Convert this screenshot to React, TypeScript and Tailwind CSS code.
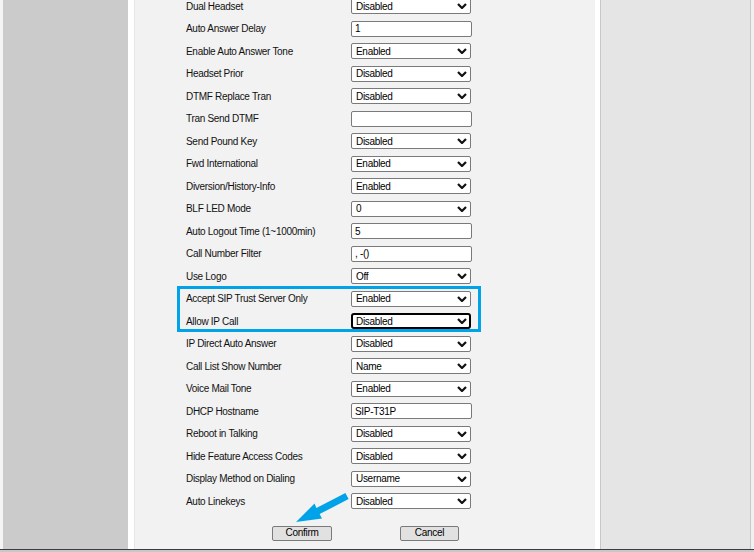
type Row = { label: string; kind: "select" | "input"; value: string; focus?: boolean };

const rows: Row[] = [
  { label: "Dual Headset", kind: "select", value: "Disabled" },
  { label: "Auto Answer Delay", kind: "input", value: "1" },
  { label: "Enable Auto Answer Tone", kind: "select", value: "Enabled" },
  { label: "Headset Prior", kind: "select", value: "Disabled" },
  { label: "DTMF Replace Tran", kind: "select", value: "Disabled" },
  { label: "Tran Send DTMF", kind: "input", value: "" },
  { label: "Send Pound Key", kind: "select", value: "Disabled" },
  { label: "Fwd International", kind: "select", value: "Enabled" },
  { label: "Diversion/History-Info", kind: "select", value: "Enabled" },
  { label: "BLF LED Mode", kind: "select", value: "0" },
  { label: "Auto Logout Time (1~1000min)", kind: "input", value: "5" },
  { label: "Call Number Filter", kind: "input", value: ", -()" },
  { label: "Use Logo", kind: "select", value: "Off" },
  { label: "Accept SIP Trust Server Only", kind: "select", value: "Enabled" },
  { label: "Allow IP Call", kind: "select", value: "Disabled", focus: true },
  { label: "IP Direct Auto Answer", kind: "select", value: "Disabled" },
  { label: "Call List Show Number", kind: "select", value: "Name" },
  { label: "Voice Mail Tone", kind: "select", value: "Enabled" },
  { label: "DHCP Hostname", kind: "input", value: "SIP-T31P" },
  { label: "Reboot in Talking", kind: "select", value: "Disabled" },
  { label: "Hide Feature Access Codes", kind: "select", value: "Disabled" },
  { label: "Display Method on Dialing", kind: "select", value: "Username" },
  { label: "Auto Linekeys", kind: "select", value: "Disabled" },
];

function Chevron() {
  return (
    <svg width="10" height="6" viewBox="0 0 10 6" className="shrink-0">
      <path d="M1 1 L5 5 L9 1" fill="none" stroke="#111" strokeWidth="2.2" />
    </svg>
  );
}

function Control({ row }: { row: Row }) {
  if (row.kind === "input") {
    return (
      <div className="w-[121px] h-[16px] bg-white border border-[#7a7a7a] rounded-[2px] flex items-center px-[3px] text-black">
        {row.value}
      </div>
    );
  }
  return (
    <div
      className={
        row.focus
          ? "w-[120px] h-[16px] bg-white border-2 border-black rounded-[3px] flex items-center justify-between pl-[3px] pr-[2px] text-black"
          : "w-[120px] h-[16px] bg-white border border-[#7a7a7a] rounded-[2px] flex items-center justify-between pl-[4px] pr-[3px] text-black"
      }
    >
      <span>{row.value}</span>
      <Chevron />
    </div>
  );
}

export default function App() {
  return (
    <div
      className="w-[754px] h-[552px] overflow-hidden flex flex-col bg-[#cbcbcb] text-[10px] tracking-[-0.3px] text-[#111]"
      style={{ fontFamily: "'Liberation Sans', Arial, sans-serif" }}
    >
      <div className="h-[549px] flex relative">
        <div className="w-[3px] bg-[#f4f4f4]" />
        <div className="w-[125px] bg-[#cbcbcb]" />
        <div className="w-[6px] bg-white" />
        {/* settings panel */}
        <div className="w-[461px] bg-[#f2f2f2] border-l border-[#e6e6e6] flex flex-col">
          <div className="mt-[-5px] pl-[51px] flex flex-col">
            {rows.map((r) => (
              <div key={r.label} className="h-[22.5px] grid grid-cols-[165px_auto] items-center">
                <span className="whitespace-nowrap">{r.label}</span>
                <Control row={r} />
              </div>
            ))}
          </div>
          <div className="mt-[13px] flex pl-[137px] gap-[68px]">
            <button className="w-[60px] h-[15px] bg-[#e1e1e1] border border-[#7a7a7a] rounded-[2px] text-[10px] leading-none text-black">
              Confirm
            </button>
            <button className="w-[59px] h-[15px] bg-[#e1e1e1] border border-[#7a7a7a] rounded-[2px] text-[10px] leading-none text-black">
              Cancel
            </button>
          </div>
        </div>
        <div className="w-[5px] bg-white" />
        <div className="w-[151px] bg-[#e5e5e5] border-l border-[#c8c8c8] border-r" />
        <div className="flex-1 bg-[#f0f0f0]" />

        {/* annotation: highlight box */}
        <div className="absolute left-[177px] top-[286px] w-[304px] h-[46px] border-[3px] border-[#00a2e8] pointer-events-none" />
        {/* annotation: arrow */}
        <svg className="absolute left-0 top-0 pointer-events-none" width="754" height="549">
          <polygon
            points="296,522 314.5,503.5 316.4,507.9 345.4,492.9 348.6,499.1 319.6,514.1 322,518.5"
            fill="#00a2e8"
          />
        </svg>
      </div>
      <div className="h-[1px] bg-[#3c3c3c]" />
      <div className="h-[2px] bg-[#c8c8c8]" />
    </div>
  );
}
